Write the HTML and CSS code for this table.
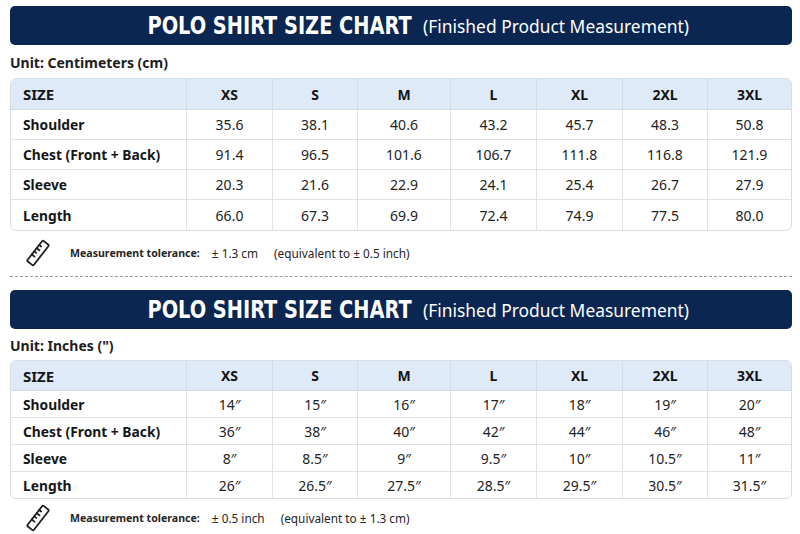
FILE: index.html
```html
<!DOCTYPE html>
<html lang="en">
<head>
<meta charset="utf-8">
<title>Polo Shirt Size Chart</title>
<link rel="stylesheet" href="styles.css">
</head>
<body>
<div class="page">
  <section class="chart chart-cm">
    <div class="banner">
      <h1 class="banner-title">POLO SHIRT SIZE CHART</h1>
      <span class="banner-sub">(Finished Product Measurement)</span>
    </div>
    <div class="unit">Unit: Centimeters (cm)</div>
    <div class="table-wrap">
      <table class="size-table">
        <colgroup>
          <col class="c-label"><col class="c-xs"><col class="c-s"><col class="c-m"><col class="c-l"><col class="c-xl"><col class="c-2xl"><col class="c-3xl">
        </colgroup>
        <thead>
          <tr><th class="lbl">SIZE</th><th>XS</th><th>S</th><th>M</th><th>L</th><th>XL</th><th>2XL</th><th>3XL</th></tr>
        </thead>
        <tbody>
          <tr><td class="lbl">Shoulder</td><td>35.6</td><td>38.1</td><td>40.6</td><td>43.2</td><td>45.7</td><td>48.3</td><td>50.8</td></tr>
          <tr><td class="lbl">Chest (Front + Back)</td><td>91.4</td><td>96.5</td><td>101.6</td><td>106.7</td><td>111.8</td><td>116.8</td><td>121.9</td></tr>
          <tr><td class="lbl">Sleeve</td><td>20.3</td><td>21.6</td><td>22.9</td><td>24.1</td><td>25.4</td><td>26.7</td><td>27.9</td></tr>
          <tr><td class="lbl">Length</td><td>66.0</td><td>67.3</td><td>69.9</td><td>72.4</td><td>74.9</td><td>77.5</td><td>80.0</td></tr>
        </tbody>
      </table>
    </div>
    <div class="tolerance">
      <svg class="ruler" viewBox="0 0 24 28" width="24" height="28" aria-hidden="true">
        <g transform="rotate(-52 12 14)" fill="none" stroke="#1f1f1f" stroke-width="1.8" stroke-linecap="round" stroke-linejoin="round">
          <rect x="-1" y="10" width="26" height="8" rx="1.3"/>
          <line x1="7" y1="10" x2="7" y2="13.5"/>
          <line x1="11" y1="10" x2="11" y2="12.5"/>
          <line x1="15" y1="10" x2="15" y2="13.5"/>
          <line x1="19" y1="10" x2="19" y2="12.5"/>
        </g>
      </svg>
      <span class="tol-label">Measurement tolerance:</span>
      <span class="tol-value">± 1.3 cm</span>
      <span class="tol-eq">(equivalent to ± 0.5 inch)</span>
    </div>
  </section>

  <hr class="divider">

  <section class="chart chart-in">
    <div class="banner">
      <h1 class="banner-title">POLO SHIRT SIZE CHART</h1>
      <span class="banner-sub">(Finished Product Measurement)</span>
    </div>
    <div class="unit">Unit: Inches (")</div>
    <div class="table-wrap">
      <table class="size-table">
        <colgroup>
          <col class="c-label"><col class="c-xs"><col class="c-s"><col class="c-m"><col class="c-l"><col class="c-xl"><col class="c-2xl"><col class="c-3xl">
        </colgroup>
        <thead>
          <tr><th class="lbl">SIZE</th><th>XS</th><th>S</th><th>M</th><th>L</th><th>XL</th><th>2XL</th><th>3XL</th></tr>
        </thead>
        <tbody>
          <tr><td class="lbl">Shoulder</td><td>14″</td><td>15″</td><td>16″</td><td>17″</td><td>18″</td><td>19″</td><td>20″</td></tr>
          <tr><td class="lbl">Chest (Front + Back)</td><td>36″</td><td>38″</td><td>40″</td><td>42″</td><td>44″</td><td>46″</td><td>48″</td></tr>
          <tr><td class="lbl">Sleeve</td><td>8″</td><td>8.5″</td><td>9″</td><td>9.5″</td><td>10″</td><td>10.5″</td><td>11″</td></tr>
          <tr><td class="lbl">Length</td><td>26″</td><td>26.5″</td><td>27.5″</td><td>28.5″</td><td>29.5″</td><td>30.5″</td><td>31.5″</td></tr>
        </tbody>
      </table>
    </div>
    <div class="tolerance">
      <svg class="ruler" viewBox="0 0 24 28" width="24" height="28" aria-hidden="true">
        <g transform="rotate(-52 12 14)" fill="none" stroke="#1f1f1f" stroke-width="1.8" stroke-linecap="round" stroke-linejoin="round">
          <rect x="-1" y="10" width="26" height="8" rx="1.3"/>
          <line x1="7" y1="10" x2="7" y2="13.5"/>
          <line x1="11" y1="10" x2="11" y2="12.5"/>
          <line x1="15" y1="10" x2="15" y2="13.5"/>
          <line x1="19" y1="10" x2="19" y2="12.5"/>
        </g>
      </svg>
      <span class="tol-label">Measurement tolerance:</span>
      <span class="tol-value">± 0.5 inch</span>
      <span class="tol-eq">(equivalent to ± 1.3 cm)</span>
    </div>
  </section>
</div>
</body>
</html>
```

FILE: styles.css
```css
* { box-sizing: border-box; }

html, body {
  margin: 0;
  padding: 0;
  background: #ffffff;
}

body {
  font-family: "Noto Sans", "Open Sans", "DejaVu Sans", sans-serif;
  color: #1c1c1c;
}

.page {
  width: 800px;
  height: 534px;
  padding: 6px 8px 0 10px;
  overflow: hidden;
}

.banner {
  height: 39px;
  background: #0b2651;
  border-radius: 5px;
  display: flex;
  align-items: center;
  justify-content: center;
  gap: 12px;
  padding-left: 35px;
  color: #ffffff;
}

.banner-title {
  margin: 0 -22px;
  font-family: "DejaVu Sans Condensed", "DejaVu Sans", sans-serif;
  font-weight: 700;
  font-size: 25px;
  line-height: 1;
  transform: scaleX(0.86);
  white-space: nowrap;
}

.banner-sub {
  font-size: 17.4px;
  font-weight: 400;
  line-height: 1;
  padding-top: 2px;
  white-space: nowrap;
}

.unit {
  font-size: 14px;
  font-weight: 700;
  line-height: 15px;
  padding-top: 10px;
  margin-bottom: 8px;
  color: #1e1e1e;
}

.table-wrap {
  border: 1px solid #d8dde4;
  border-radius: 6px;
  overflow: hidden;
}

.size-table {
  width: 780px;
  table-layout: fixed;
  border-collapse: separate;
  border-spacing: 0;
}

.c-label { width: 176px; }
.c-xs { width: 86px; }
.c-s { width: 85px; }
.c-m { width: 93px; }
.c-l { width: 86px; }
.c-xl { width: 86px; }
.c-2xl { width: 85px; }
.c-3xl { width: 83px; }

.size-table th,
.size-table td {
  padding: 0;
  text-align: center;
  border-right: 1px solid #e0e2e6;
  border-bottom: 1px solid #e0e2e6;
  white-space: nowrap;
}

.size-table th:last-child,
.size-table td:last-child { border-right: none; }

.size-table tbody tr:last-child td { border-bottom: none; }

.size-table th {
  background: #dfeaf8;
  font-size: 14px;
  font-weight: 700;
  color: #141414;
  border-bottom-color: #d3dbe6;
  border-right-color: #d3dbe6;
}

.size-table td {
  font-size: 14px;
  font-weight: 400;
  color: #232323;
}

.size-table .lbl {
  text-align: left;
  padding-left: 12px;
  font-weight: 700;
  color: #161616;
  font-size: 13.8px;
}

.size-table th.lbl { font-size: 15px; }

.chart-cm thead tr { height: 31px; }
.chart-cm tbody tr { height: 30px; }

.chart-in thead tr { height: 30px; }
.chart-in tbody tr { height: 27px; }
.chart-in tbody tr:last-child { height: 26px; }

.chart-in .unit { padding-top: 9px; margin-bottom: 7px; }

.tolerance {
  display: flex;
  align-items: center;
  padding-top: 8px;
  padding-left: 16px;
  font-size: 11.8px;
  color: #262626;
}

.chart-in .tolerance { padding-top: 5px; }

.ruler {
  flex: none;
  margin-right: 20px;
}

.tol-label {
  font-weight: 700;
  font-size: 10.6px;
  margin-right: 12px;
}

.tol-value { margin-right: 16px; }

.divider {
  margin: 9px 0 13px 0;
  border: none;
  border-top: 1px dashed #9a9a9a;
  height: 0;
}
```
